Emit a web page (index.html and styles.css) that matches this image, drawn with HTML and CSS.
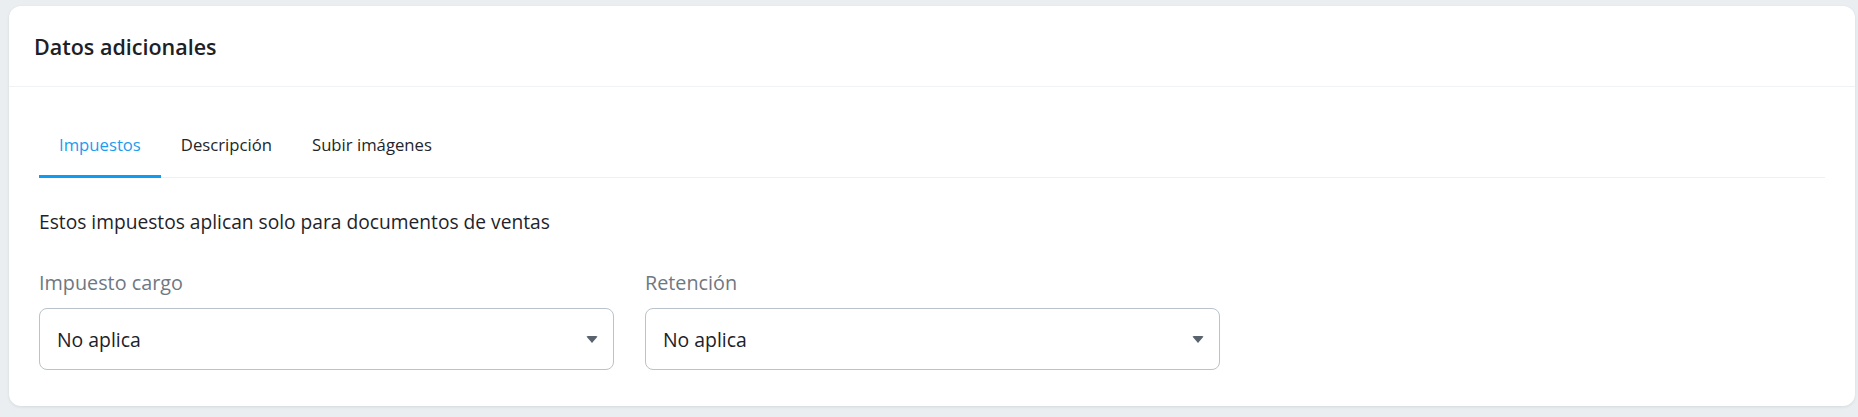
FILE: index.html
```html
<!DOCTYPE html>
<html lang="es">
<head>
<meta charset="utf-8">
<title>Datos adicionales</title>
<link rel="stylesheet" href="styles.css">
</head>
<body>
<div class="page">
  <section class="card">
    <header class="card-header">
      <h2 class="card-title">Datos adicionales</h2>
    </header>
    <div class="card-body">
      <nav class="tabs">
        <a class="tab active">Impuestos</a>
        <a class="tab">Descripción</a>
        <a class="tab">Subir imágenes</a>
      </nav>
      <p class="note">Estos impuestos aplican solo para documentos de ventas</p>
      <div class="fields">
        <div class="field">
          <label class="label">Impuesto cargo</label>
          <div class="select">
            <span class="select-value">No aplica</span>
            <span class="caret"></span>
          </div>
        </div>
        <div class="field">
          <label class="label">Retención</label>
          <div class="select">
            <span class="select-value">No aplica</span>
            <span class="caret"></span>
          </div>
        </div>
      </div>
    </div>
  </section>
</div>
</body>
</html>
```

FILE: styles.css
```css
* { box-sizing: border-box; }
html, body { margin: 0; padding: 0; }
body {
  background: #eaeef1;
  font-family: "Open Sans", Lato, sans-serif;
  color: #1f2329;
  width: 1858px;
  height: 417px;
  overflow: hidden;
}
.page {
  padding: 6px 3px 0 9px;
}
.card {
  background: #ffffff;
  border-radius: 12px;
  box-shadow: 0 1px 3px rgba(60, 72, 88, 0.12);
  height: 400px;
  width: 1846px;
}
.card-header {
  height: 81px;
  border-bottom: 1px solid #f0f2f4;
  display: flex;
  align-items: center;
  padding: 0 25px;
}
.card-title {
  margin: 0;
  font-size: 21.5px;
  font-weight: 600;
  color: #1c2128;
}
.card-body {
  padding: 27px 30px 0;
}
.tabs {
  display: flex;
  border-bottom: 1px solid #eef0f2;
}
.tab {
  padding: 19px 20px 18px;
  font-size: 16.7px;
  line-height: 24px;
  color: #22262b;
  border-bottom: 3px solid transparent;
  margin-bottom: -1px;
}
.tab.active {
  color: #1a9cf0;
  border-bottom-color: #0e9bf3;
}
.note {
  margin: 32px 0 0;
  font-size: 19.2px;
  line-height: 24px;
  color: #1f2329;
}
.fields {
  display: flex;
  gap: 31px;
  margin-top: 37px;
}
.field {
  width: 575px;
}
.label {
  display: block;
  font-size: 19.8px;
  line-height: 24px;
  color: #6f7882;
  margin-bottom: 13px;
}
.select {
  height: 62px;
  border: 1px solid #b9c3c9;
  border-radius: 8px;
  display: flex;
  align-items: center;
  justify-content: space-between;
  padding: 0 15px 0 17px;
}
.select-value {
  font-size: 19.4px;
  color: #1c2128;
}
.caret {
  width: 0;
  height: 0;
  border-left: 6.5px solid transparent;
  border-right: 6.5px solid transparent;
  border-top: 7px solid #59636d;
  border-radius: 2px;
}
```
